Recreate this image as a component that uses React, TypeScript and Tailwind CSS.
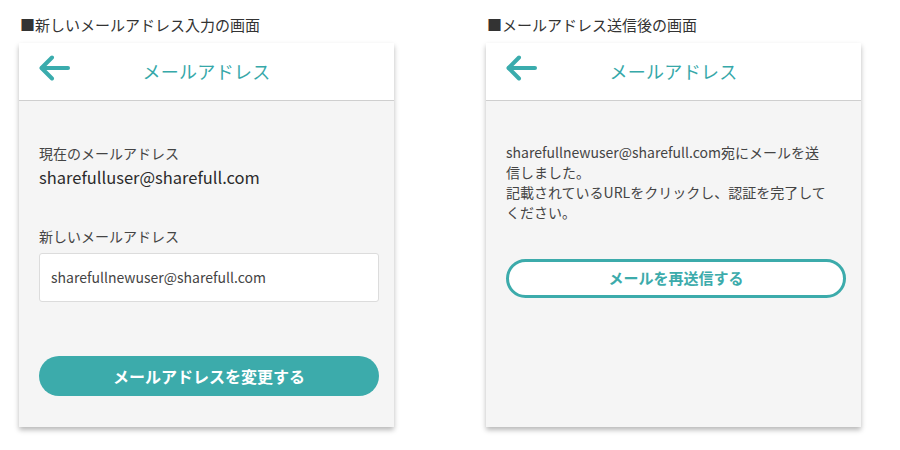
const font = "font-['Noto_Sans_CJK_JP','Noto_Sans',sans-serif]";

function BackArrow() {
  return (
    <svg width="32" height="28" viewBox="0 0 32 28" fill="none" stroke="#3aacad" strokeWidth="4" strokeLinecap="round" strokeLinejoin="round">
      <path d="M29 14H3" />
      <path d="M13 3.5L2.5 14L13 24.5" />
    </svg>
  );
}

function Screen({ label, children }: { label: string; children: React.ReactNode }) {
  return (
    <div className="flex w-[375px] flex-col">
      <p className="mb-[8px] h-[20px] pl-[1px] text-[15px] leading-[20px] text-[#333]">■{label}</p>
      <div className="flex h-[384px] flex-col bg-[#f5f5f5] shadow-[0_3px_5px_rgba(0,0,0,0.28)]">
        <header className="relative flex h-[58px] items-center justify-center border-b border-[#cfcfcf] bg-white">
          <span className="absolute left-[20px] top-[11px]">
            <BackArrow />
          </span>
          <h1 className="text-[18px] font-normal tracking-[0.015em] text-[#36a8a9]">メールアドレス</h1>
        </header>
        {children}
      </div>
    </div>
  );
}

export default function App() {
  return (
    <div className={`${font} flex h-[450px] w-[900px] gap-[92px] bg-white pl-[19px] pt-[15px]`}>
      <Screen label="新しいメールアドレス入力の画面">
        <div className="flex flex-col pl-5 pr-[15px] pt-[42px]">
          <p className="text-[14px] leading-[20px] text-[#444]">現在のメールアドレス</p>
          <p className="mt-[2px] text-[16.5px] font-normal leading-[24px] text-[#2b2b2b]">sharefulluser@sharefull.com</p>
          <p className="mt-[37px] text-[14px] leading-[20px] text-[#444]">新しいメールアドレス</p>
          <div className="mt-[7px] flex h-[49px] items-center rounded-[3px] border border-[#dcdcdc] bg-white px-[11px] text-[14px] text-[#444]">
            sharefullnewuser@sharefull.com
          </div>
          <button className="mt-[54px] h-[40px] rounded-full bg-[#3cabab] text-[16px] font-bold text-white">
            メールアドレスを変更する
          </button>
        </div>
      </Screen>
      <Screen label="メールアドレス送信後の画面">
        <div className="flex flex-col pl-5 pr-[15px] pt-[41px]">
          <p className="text-[14px] leading-[20px] text-[#444]">
            <span className="block whitespace-nowrap">sharefullnewuser@sharefull.com宛にメールを送</span>
            <span className="block">信しました。</span>
            <span className="block whitespace-nowrap">記載されているURLをクリックし、認証を完了して</span>
            <span className="block">ください。</span>
          </p>
          <button className="mt-[37px] h-[39px] rounded-full border-[3px] border-[#3cabab] bg-white text-[15px] font-bold text-[#3cabab]">
            メールを再送信する
          </button>
        </div>
      </Screen>
    </div>
  );
}
